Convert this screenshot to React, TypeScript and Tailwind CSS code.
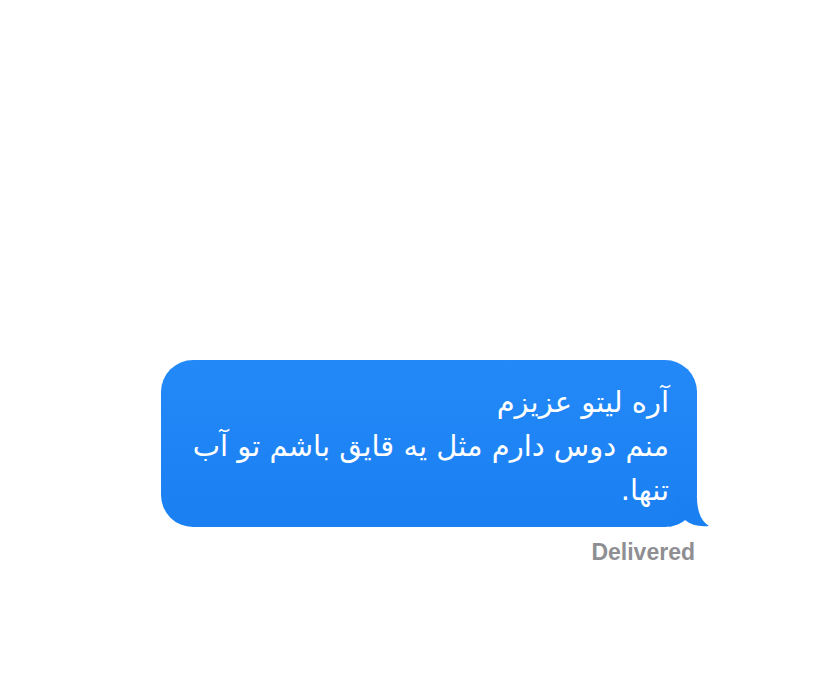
export default function App() {
  return (
    <div className="flex h-[700px] w-[840px] flex-col items-end bg-white pr-[143px] pt-[360px]">
      {/* Message bubble */}
      <div className="relative w-[536px]">
        <div
          dir="rtl"
          className="rounded-[32px] bg-gradient-to-b from-[#2389f8] to-[#1a80f2] pb-[15px] pl-[30px] pr-[28px] pt-[20px] text-right text-[29px] leading-[44px] text-white"
          style={{ fontFamily: '"DejaVu Sans", "Noto Sans", sans-serif' }}
        >
          <div>آره لیتو عزیزم</div>
          <div>منم دوس دارم مثل یه قایق باشم تو آب</div>
          <div>تنها.</div>
        </div>
        {/* Tail */}
        <svg
          className="absolute bottom-0 right-[-12px]"
          width="40"
          height="30"
          viewBox="0 0 40 30"
        >
          <path
            d="M8 0 L28 0 C28 14 32 24 40 29 C30 30 22 28 16 23 C12 26 8 28 0 30 Z"
            fill="#1a80f2"
          />
        </svg>
      </div>
      <div
        className="mr-[2px] mt-[8px] text-[23px] font-semibold text-[#8e8e93]"
        style={{ fontFamily: '"Liberation Sans", Arial, sans-serif' }}
      >
        Delivered
      </div>
    </div>
  );
}
